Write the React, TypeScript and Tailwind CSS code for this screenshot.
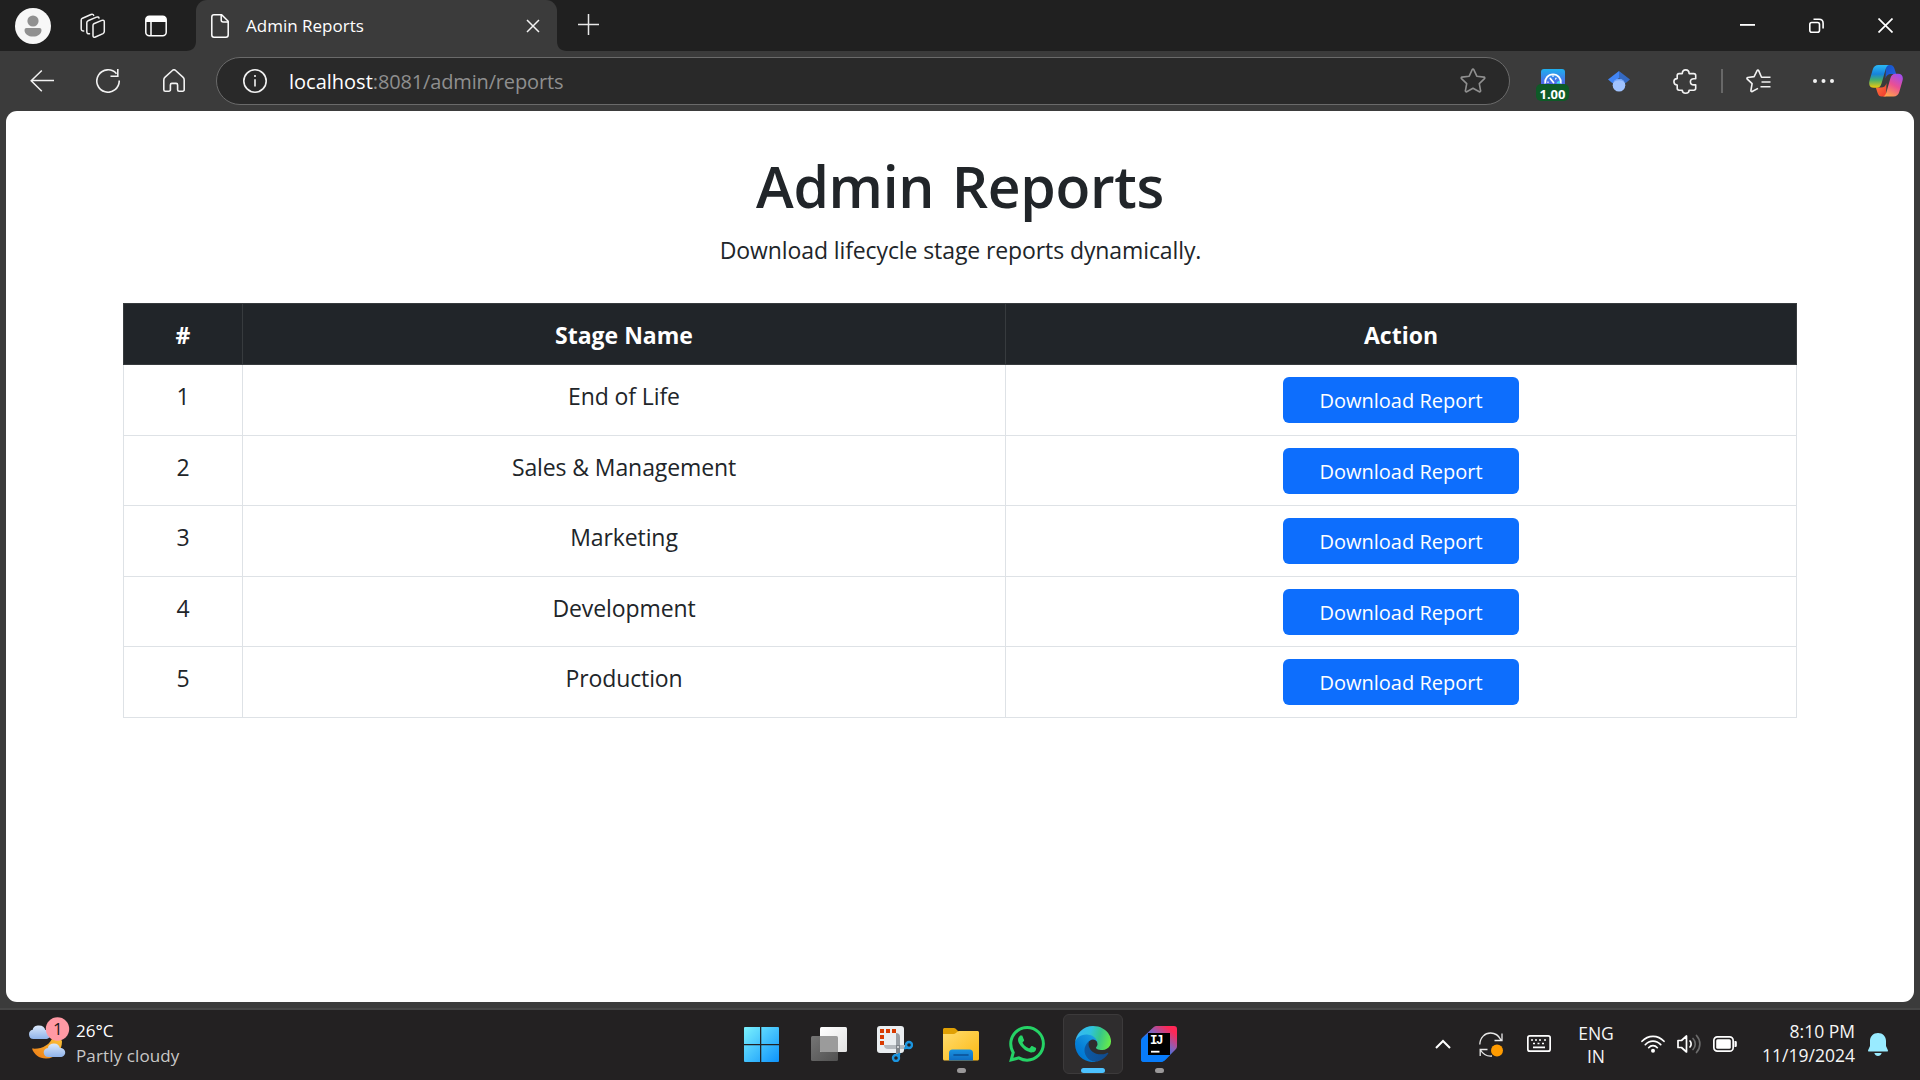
import React from "react";
import { SiWhatsapp } from "react-icons/si";

const stages = ["End of Life", "Sales & Management", "Marketing", "Development", "Production"];

function Avatar() {
  return (
    <svg className="ml-[15px] size-9 shrink-0" viewBox="0 0 36 36">
      <circle cx="18" cy="18" r="18" fill="#f7f7f7" />
      <circle cx="18" cy="13" r="5.6" fill="#919191" />
      <path d="M11.5 20h13a2 2 0 0 1 2 2c0 4-3.6 6.6-8.5 6.6S9.500 26 9.500 22a2 2 0 0 1 2-2Z" fill="#919191" />
    </svg>
  );
}

function WorkspacesIcon() {
  return (
    <svg className="ml-[29px] size-[26px] shrink-0" viewBox="0 0 26 26" fill="none" stroke="#f2f2f2" strokeWidth="1.5" strokeLinejoin="round" strokeLinecap="round">
      <path d="M13.800 10.800 21.800 7.400c1.500-.6 2.500 0 2.500 1.400v9.800c0 .9-.5 1.600-1.300 2l-7.600 3.400c-1.400.6-2.400 0-2.400-1.300V12.600c0-.9.1-1.500.8-1.800Z" />
      <path d="M9.500 20.800c-1.900.3-2.700-.6-2.700-2.100V9.800c0-.9.4-1.600 1.200-2l8.500-3.700c1.100-.4 2.300-.1 2.500 1" />
      <path d="M3.700 18c-1.600.1-2.500-.8-2.500-2.300V7.200c0-.9.5-1.600 1.300-2L11 1.500c1.200-.5 2.400-.1 2.700.9" />
    </svg>
  );
}

function TabActionsIcon() {
  return (
    <svg className="ml-[39px] size-[22px] shrink-0" viewBox="0 0 22 22" fill="none">
      <rect x="0.800" y="1.300" width="20.400" height="19.400" rx="3.500" stroke="#fff" strokeWidth="1.500" />
      <path d="M1 6.900V4.500A3.500 3.500 0 0 1 4.500 1h13A3.500 3.500 0 0 1 21 4.500v2.400Z" fill="#fff" />
      <path d="M6 7v14" stroke="#fff" strokeWidth="1.500" />
    </svg>
  );
}

function TitleBar() {
  return (
    <div className="flex h-[51px] items-center bg-[#202020]">
      <Avatar />
      <WorkspacesIcon />
      <TabActionsIcon />
      <div className="ml-[19px] flex h-[51px] w-[381px] shrink-0 items-center text-[#3b3b3b]">
        <svg className="h-[51px] w-[10px] shrink-0" viewBox="0 0 10 51" fill="currentColor">
          <path d="M0 51c6.500 0 10-3.500 10-10v10Z" />
        </svg>
        <div className="flex h-full w-[361px] items-center rounded-t-[11px] bg-[#3b3b3b]">
          <svg className="ml-[15px] h-[24px] w-[18px] shrink-0" viewBox="0 0 18 24" fill="none" stroke="#fff" strokeWidth="1.500" strokeLinejoin="round">
            <path d="M3 .8h7.700l6.500 6.500V21a2.200 2.200 0 0 1-2.200 2.200H3A2.200 2.200 0 0 1 .8 21V3A2.200 2.200 0 0 1 3 .8Z" />
            <path d="M10.200 1v5a2 2 0 0 0 2 2H17" />
          </svg>
          <span className="ml-[17px] text-[17px] leading-6 text-white">Admin Reports</span>
          <svg className="ml-auto mr-[17px] size-[14px] shrink-0" viewBox="0 0 14 14" stroke="#f2f2f2" strokeWidth="1.500">
            <path d="m1 1 12 12M13 1 1 13" />
          </svg>
        </div>
        <svg className="h-[51px] w-[10px] shrink-0" viewBox="0 0 10 51" fill="currentColor">
          <path d="M10 51C3.500 51 0 47.500 0 41v10Z" />
        </svg>
      </div>
      <svg className="ml-[11px] mb-0.5 size-[21px] shrink-0" viewBox="0 0 21 21" stroke="#e8e8e8" strokeWidth="1.500">
        <path d="M10.500 0v21M0 10.500h21" />
      </svg>
      <div className="ml-auto mr-[27px] flex items-center gap-[54px]">
        <svg className="size-[15px]" viewBox="0 0 15 15" fill="#fff">
          <path d="M0 6h15v1.800H0z" />
        </svg>
        <svg className="size-[15px]" viewBox="0 0 15 15" fill="none" stroke="#fff" strokeWidth="1.600">
          <rect x="0.800" y="4.500" width="9.700" height="9.700" rx="2" />
          <path d="M4.500 1.200h5.600c2.300 0 4 1.700 4 4v5.300" />
        </svg>
        <svg className="size-[15px]" viewBox="0 0 15 15" stroke="#fff" strokeWidth="1.700">
          <path d="m.5.5 14 14M14.500.5l-14 14" />
        </svg>
      </div>
    </div>
  );
}

function SpeedExtension() {
  return (
    <div className="ml-[26px] flex h-[48px] w-[33px] shrink-0 flex-col items-center pt-[12px]">
      <svg className="h-[16px] w-6 shrink-0" viewBox="0 0 24 16">
        <defs>
          <linearGradient id="speed" x1="0" y1="0" x2="0" y2="1">
            <stop offset="0" stopColor="#1fb0ee" />
            <stop offset="1" stopColor="#5560e8" />
          </linearGradient>
        </defs>
        <path d="M0 16V3a3 3 0 0 1 3-3h18a3 3 0 0 1 3 3v13Z" fill="url(#speed)" />
        <path d="M4.200 14.500a7.900 7.900 0 1 1 15.600 0" fill="none" stroke="#fff" strokeWidth="1.800" />
        <path d="m9.300 9.500 3.200 4" stroke="#fff" strokeWidth="1.800" strokeLinecap="round" />
        <path d="m15.300 8.800-1 1.700M7 12.500v1.500M12 6.300v1.700" stroke="#fff" strokeWidth="1.200" />
        <path d="M15.500 14.500c0-1.600 1-2.500 3.500-2.500v2.500Z" fill="#3fe0f0" />
      </svg>
      <span className="-mt-px h-[17px] w-[33px] rounded-[5px] bg-[#0e5a27] text-center text-[13px] font-bold leading-[20px] text-white">1.00</span>
    </div>
  );
}

function CopilotIcon() {
  return (
    <svg className="ml-[35px] h-[32px] w-[34px] shrink-0" viewBox="0 0 34 32">
      <defs>
        <linearGradient id="cpA" x1="0" y1="0" x2="0" y2="1">
          <stop offset="0" stopColor="#2bb8f5" />
          <stop offset="0.400" stopColor="#1683dc" />
          <stop offset="0.650" stopColor="#43ae70" />
          <stop offset="1" stopColor="#f2cb0b" />
        </linearGradient>
        <linearGradient id="cpB" x1="0.800" y1="0" x2="0.300" y2="1">
          <stop offset="0" stopColor="#a04df0" />
          <stop offset="0.500" stopColor="#ea4f94" />
          <stop offset="1" stopColor="#ffa34c" />
        </linearGradient>
        <linearGradient id="cpC" x1="0" y1="0" x2="1" y2="1">
          <stop offset="0" stopColor="#1453c4" />
          <stop offset="1" stopColor="#2764e7" />
        </linearGradient>
        <linearGradient id="cpD" x1="0" y1="0" x2="1" y2="1">
          <stop offset="0" stopColor="#ff7b3d" />
          <stop offset="1" stopColor="#f0382e" />
        </linearGradient>
      </defs>
      <path d="M17 0h4.500c2 0 3.200 1.300 3.800 3.300L27.200 9H22c-3 0-4.700 1.500-5.500 4.500Z" fill="url(#cpC)" />
      <path d="M17 31.500h-4.500c-2 0-3.200-1.300-3.800-3.300L6.800 22.500H12c3 0 4.700-1.500 5.500-4.500Z" fill="url(#cpD)" />
      <path d="M9.500 0H20c-1.800.5-2.800 2-3.400 4.300l-4 14c-.8 3-2.400 4.500-5.200 4.500H5C1 22.800-.6 19.800.5 15.800L3.600 5C4.500 1.800 6.500 0 9.500 0Z" fill="url(#cpA)" />
      <path d="M24.500 31.500H14c1.800-.5 2.800-2 3.400-4.300l4-14c.8-3 2.400-4.500 5.200-4.500H29c4 0 5.600 3 4.500 7l-3.100 10.800c-.9 3.200-2.900 5-5.900 5Z" fill="url(#cpB)" />
    </svg>
  );
}

function Toolbar() {
  return (
    <div className="flex h-[60px] shrink-0 items-center bg-[#3b3b3b]">
      <svg className="ml-[30px] size-6 shrink-0" viewBox="0 0 24 24" fill="none" stroke="#f2f2f2" strokeWidth="1.500">
        <path d="M24 11.500H1M11.800 1.500 1.200 11.700l10.600 10.600" />
      </svg>
      <svg className="ml-[42px] size-6 shrink-0" viewBox="0 0 24 24" fill="none" stroke="#f2f2f2" strokeWidth="1.600">
        <path d="M23.200 11.500A11.200 11.200 0 1 1 20.500 4.700M21.800 0v7.200h-7.300" />
      </svg>
      <svg className="ml-[43px] h-6 w-[22px] shrink-0" viewBox="0 0 22 24" fill="none" stroke="#f2f2f2" strokeWidth="1.600" strokeLinejoin="round">
        <path d="M9.400 1.500a2.400 2.400 0 0 1 3.200 0l7.300 6.600c.8.700 1.300 1.700 1.300 2.800v9.800a1.500 1.500 0 0 1-1.500 1.500h-3.600a1.500 1.500 0 0 1-1.500-1.500v-4.800a1.500 1.500 0 0 0-1.500-1.500H8.900a1.500 1.500 0 0 0-1.500 1.500v4.800a1.500 1.500 0 0 1-1.500 1.500H2.300a1.500 1.500 0 0 1-1.500-1.500v-9.800c0-1.100.5-2.100 1.300-2.800Z" />
      </svg>
      <div className="ml-[31px] flex h-[48px] w-[1294px] shrink-0 items-center rounded-full border border-[#6a6a6a] bg-[#292929]">
        <svg className="ml-[26px] size-6 shrink-0" viewBox="0 0 24 24" fill="none" stroke="#f2f2f2" strokeWidth="1.600">
          <circle cx="12" cy="12" r="11.200" />
          <path d="M12 10.300V17.500M12 6v2" />
        </svg>
        <p className="ml-[22px] pt-0.5 text-[20px] leading-7 text-[#8f8f8f]">
          <span className="text-white">localhost</span>
          <span className="tracking-[-0.15px]">:8081/admin/reports</span>
        </p>
        <svg className="ml-auto mr-[23px] size-[26px] shrink-0" viewBox="0 0 26 26" fill="none" stroke="#8f8f8f" strokeWidth="1.600" strokeLinejoin="round">
          <path d="M12.200 1.600a.9.900 0 0 1 1.600 0l3 6.600 7.200.9c.8.100 1.100 1 .5 1.500l-5.200 5 1.300 7.200c.2.800-.6 1.300-1.300 1L13 20.300l-6.300 3.500c-.7.300-1.500-.2-1.300-1l1.300-7.200-5.200-5C.9 10.100 1.200 9.200 2 9.100l7.200-.9Z" />
        </svg>
      </div>
      <SpeedExtension />
      <svg className="ml-[39px] h-[21px] w-[22px] shrink-0" viewBox="0 0 22 21">
        <path d="M11 0 0 8.500l4.500 3.800L11 7Z" fill="#4285f4" />
        <path d="m11 0 11 8.500-4.500 3.800L11 7Z" fill="#356ac3" />
        <circle cx="11" cy="14.200" r="6.300" fill="#a0c3ff" />
        <path d="M5.200 11.700a6.300 6.300 0 0 1 11.600 0C15 10 13 9.300 11 9.300s-4 .7-5.800 2.400Z" fill="#76a7fa" />
      </svg>
      <svg className="ml-[43px] size-[25px] shrink-0" viewBox="0 0 25 25" fill="none" stroke="#f2f2f2" strokeWidth="1.600" strokeLinejoin="round">
        <path d="M4.200 9.600V6.500c0-1.200.7-1.900 1.900-1.900h3.200C9.300 2.200 10.600.9 12.700.9s3.400 1.300 3.400 3.700h4.700c1.200 0 1.900.7 1.900 1.900v3.200h-1.800c-2.200 0-3.500 1.200-3.500 3.100s1.300 3.100 3.500 3.100h1.800v3.400c0 1.200-.7 1.900-1.900 1.900h-4.700c0 1.900-1.300 3-3.400 3s-3.400-1.100-3.400-3H6.100c-1.200 0-1.900-.7-1.900-1.900V16C2 16 .9 14.700.9 12.800S2 9.600 4.200 9.600Z" />
      </svg>
      <div className="ml-[23px] h-6 w-[1.500px] shrink-0 bg-[#686868]" />
      <svg className="ml-[23px] h-6 w-[25px] shrink-0" viewBox="0 0 25 24" fill="none" stroke="#f2f2f2" strokeWidth="1.600" strokeLinejoin="round">
        <path d="M16.500 8.200h-1L12.700 1.600a.9.900 0 0 0-1.600 0l-3 6-6.300.9c-.8.100-1.100 1-.5 1.600l4.800 4.600-1.200 6.800c-.1.800.6 1.300 1.300 1l5.800-3.100M16 8.200h8.500M15.500 13h9M14.500 17.800h10" />
      </svg>
      <svg className="ml-[42px] h-1 w-[21px] shrink-0" viewBox="0 0 21 4" fill="#f2f2f2">
        <circle cx="2" cy="2" r="2" />
        <circle cx="10.500" cy="2" r="2" />
        <circle cx="19" cy="2" r="2" />
      </svg>
      <CopilotIcon />
    </div>
  );
}

function ReportsPage() {
  return (
    <main className="mx-1.5 flex h-[891px] shrink-0 flex-col items-center rounded-[11px] bg-white pt-[39px] text-[#212529]">
      <h1 className="text-[57px] font-semibold leading-[72px] tracking-[-0.3px] [word-spacing:3px]">Admin Reports</h1>
      <p className="mt-2.5 pl-px text-[23px] leading-9 tracking-[-0.1px]">Download lifecycle stage reports dynamically.</p>
      <div className="mt-[35px] w-[1674px] text-center text-[23px] leading-9">
        <div className="grid h-[62px] grid-cols-[119px_763px_792px] border-y border-[#373b3e] bg-[#212529] font-bold leading-[62px] text-white">
          <div className="border-l border-[#373b3e]">#</div>
          <div className="border-l border-[#373b3e]">Stage Name</div>
          <div className="border-x border-[#373b3e]">Action</div>
        </div>
        {stages.map((name, i) => (
          <div key={name} className="grid grid-cols-[119px_763px_792px] border-b border-[#dee2e6] odd:h-[70px] even:h-[71px]">
            <div className="border-l border-[#dee2e6] pt-[13px]">{i + 1}</div>
            <div className="border-l border-[#dee2e6] pt-[13px] tracking-[-0.1px]">{name}</div>
            <div className="flex items-start justify-center border-x border-[#dee2e6] pt-3">
              <button className="h-[46px] w-[236px] rounded-md bg-[#0d6efd] text-[20px] leading-[46px] text-white">
                <span className="block pt-px">Download Report</span>
              </button>
            </div>
          </div>
        ))}
      </div>
    </main>
  );
}

function WeatherIcon() {
  return (
    <svg className="ml-[28px] size-[42px] shrink-0 overflow-visible" viewBox="0 6.500 42 42">
      <defs>
        <linearGradient id="cloud" x1="0" y1="0" x2="0" y2="1">
          <stop offset="0" stopColor="#dbe9fb" />
          <stop offset="1" stopColor="#8fb3ea" />
        </linearGradient>
        <linearGradient id="moon" x1="1" y1="0" x2="0" y2="1">
          <stop offset="0" stopColor="#fcc63a" />
          <stop offset="1" stopColor="#ee7a14" />
        </linearGradient>
      </defs>
      <path d="M25 20c3.500 1 8 0 9 5 0 9-6 17-16 17C11 42 6 38 4 32c9 1 18-3 21-12Z" fill="url(#moon)" />
      <path d="M5.500 22.500a4.700 4.700 0 0 1-.7-9.300C5 10.500 7.500 9 11 9c3.700 0 5.700 2 6.300 4.500 3.200 0 5.200 2 5.200 4.500s-2 4.500-5 4.500Z" fill="url(#cloud)" />
      <path d="M20.500 40.500a4.500 4.500 0 0 1-.6-9c.3-3 2.800-4.500 6-4.500 3.500 0 5.400 2 6 4.500 3.300 0 5.300 2 5.300 4.500s-2 4.500-5 4.500Z" fill="url(#cloud)" />
      <circle cx="29.500" cy="12.500" r="11.700" fill="#ff99a4" />
      <text x="29.800" y="18.500" textAnchor="middle" fontSize="17" fill="#1a1a1a">1</text>
    </svg>
  );
}

function AppTile({ children, active, running }: { children: React.ReactNode; active?: boolean; running?: boolean }) {
  return (
    <div className={active ? "flex size-[60px] flex-col items-center rounded-md border border-[#3c3a3b] bg-[#2f2d2e] pt-[11px]" : "flex size-[60px] flex-col items-center pt-3"}>
      {children}
      {active && <div className="mt-1.5 h-[5px] w-6 shrink-0 rounded-full bg-[#4cc2ff]" />}
      {running && <div className="mt-1.5 h-[5px] w-[9px] shrink-0 rounded-full bg-[#9a9899]" />}
    </div>
  );
}

function StartIcon() {
  return (
    <svg className="size-9 shrink-0 overflow-visible" viewBox="2 -1 36 36">
      <defs>
        <linearGradient id="win" gradientUnits="userSpaceOnUse" x1="0" y1="0" x2="35" y2="35">
          <stop offset="0" stopColor="#7cf3fd" />
          <stop offset="0.500" stopColor="#45c3fd" />
          <stop offset="1" stopColor="#0f94fb" />
        </linearGradient>
      </defs>
      <path d="M2 0h15v17H1V1a1 1 0 0 1 1-1ZM18.300 0H35a1 1 0 0 1 1 1v16H18.300ZM1 18.300h16V35H2a1 1 0 0 1-1-1ZM18.300 18.300H36V34a1 1 0 0 1-1 1H18.300Z" fill="url(#win)" />
    </svg>
  );
}

function TaskViewIcon() {
  return (
    <svg className="size-9 shrink-0" viewBox="0 0 36 36">
      <defs>
        <linearGradient id="tvA" x1="0" y1="0" x2="1" y2="1">
          <stop offset="0" stopColor="#ffffff" />
          <stop offset="1" stopColor="#e2e2e2" />
        </linearGradient>
        <linearGradient id="tvB" x1="0" y1="0" x2="1" y2="1">
          <stop offset="0" stopColor="#757575" />
          <stop offset="1" stopColor="#515151" />
        </linearGradient>
      </defs>
      <rect x="0" y="10" width="27" height="25" rx="1.500" fill="url(#tvB)" />
      <rect x="9" y="1" width="27" height="25" rx="1.500" fill="url(#tvA)" />
      <path d="M9 10h16.500a1.500 1.500 0 0 1 1.500 1.500V26H10.500A1.500 1.500 0 0 1 9 24.500Z" fill="#9b9b9b" />
    </svg>
  );
}

function SnippingIcon() {
  return (
    <svg className="size-9 shrink-0" viewBox="0 0 36 36">
      <rect x="0" y="0" width="27" height="27" rx="3" fill="#eaeef1" />
      <g fill="#d83b01">
        <path d="M3 3h4v4H3zM9 3h4v4H9zM15 3h4v4h-4zM3 9h4v4H3zM3 15h4v4H3z" />
      </g>
      <path d="M19 7c2.500 0 4 1.500 4 4v17h-4Z" fill="#9aa0a6" />
      <path d="M7 19c0 2.500 1.500 4 4 4h17v-4Z" fill="#b4b9be" />
      <path d="M19 19h4v9l-4-1Z" fill="#7d8389" />
      <circle cx="21" cy="21" r="1" fill="#e8eaec" />
      <circle cx="32" cy="19" r="3" fill="none" stroke="#1b95e0" strokeWidth="2.400" />
      <circle cx="19" cy="32" r="3" fill="none" stroke="#1b95e0" strokeWidth="2.400" />
      <path d="m27 22.500 4.500-1M22.500 27l-1 4" stroke="#1b95e0" strokeWidth="2.200" />
    </svg>
  );
}

function FolderIcon() {
  return (
    <svg className="size-9 shrink-0" viewBox="0 0 36 36">
      <defs>
        <linearGradient id="fold" x1="0" y1="0" x2="1" y2="1">
          <stop offset="0" stopColor="#ffdc6e" />
          <stop offset="1" stopColor="#fcb913" />
        </linearGradient>
        <linearGradient id="dock" x1="0" y1="0" x2="0" y2="1">
          <stop offset="0" stopColor="#1a93e0" />
          <stop offset="1" stopColor="#0f6cc2" />
        </linearGradient>
      </defs>
      <path d="M0 3.500C0 2.700.7 2 1.500 2h9.200c.8 0 1.500.3 2 .8L15.500 5.500v6H0Z" fill="#e0a004" />
      <path d="M0 8h10.500c1 0 1.700-.3 2.400-.9l1.200-1.200c.6-.6 1.300-.9 2.200-.9H34.500c.8 0 1.500.7 1.500 1.500V33c0 .8-.7 1.500-1.500 1.500h-33C.7 34.500 0 33.800 0 33Z" fill="url(#fold)" />
      <path d="M6 34.500V27a3.500 3.500 0 0 1 3.500-3.500h17A3.500 3.500 0 0 1 30 27v7.500Z" fill="url(#dock)" />
      <path d="M11 29h14" stroke="#0a4f94" strokeWidth="1.600" strokeLinecap="round" />
    </svg>
  );
}

function EdgeIcon() {
  return (
    <svg className="size-9 shrink-0" viewBox="0 0 256 256">
      <defs>
        <linearGradient id="eA" gradientUnits="userSpaceOnUse" x1="63" y1="177" x2="241" y2="177">
          <stop offset="0" stopColor="#0c59a4" />
          <stop offset="1" stopColor="#114a8b" />
        </linearGradient>
        <linearGradient id="eB" gradientUnits="userSpaceOnUse" x1="157" y1="100" x2="46" y2="221">
          <stop offset="0" stopColor="#1b9de2" />
          <stop offset="0.160" stopColor="#1595df" />
          <stop offset="0.670" stopColor="#0680d7" />
          <stop offset="1" stopColor="#0078d4" />
        </linearGradient>
        <linearGradient id="eC" gradientUnits="userSpaceOnUse" x1="20" y1="50" x2="250" y2="115">
          <stop offset="0" stopColor="#35b8f1" />
          <stop offset="0.350" stopColor="#2fc2df" />
          <stop offset="0.650" stopColor="#36c78a" />
          <stop offset="1" stopColor="#66eb4a" />
        </linearGradient>
      </defs>
      <path d="M231.050 190.540a93.730 93.730 0 0 1-10.540 4.710 101.870 101.870 0 0 1-35.900 6.460c-47.320 0-88.540-32.550-88.540-74.320A31.480 31.480 0 0 1 112.500 100.080c-42.800 1.800-53.800 46.400-53.800 72.530 0 73.880 68.090 81.370 82.760 81.370 7.910 0 19.840-2.300 27-4.560l1.310-.44a128.340 128.340 0 0 0 66.600-52.800 4 4 0 0 0-5.320-5.640Z" fill="url(#eA)" />
      <path d="M105.730 241.420A79.200 79.200 0 0 1 83 220.080a80.720 80.720 0 0 1 29.490-120c3.120-1.470 8.450-4.130 15.540-4a32.350 32.350 0 0 1 25.690 13 31.880 31.880 0 0 1 6.360 18.660c0-.21 24.460-79.600-80-79.600-43.900 0-80 41.660-80 78.210a130.150 130.150 0 0 0 12.110 56 128 128 0 0 0 156.380 67.110 75.550 75.550 0 0 1-62.780-8Z" fill="url(#eB)" />
      <path d="M152.330 148.860c-.81 1.050-3.300 2.500-3.300 5.660 0 2.610 1.700 5.120 4.720 7.230 14.380 10 41.490 8.680 41.560 8.680a59.560 59.560 0 0 0 30.270-8.350 61.380 61.380 0 0 0 30.430-52.880c.26-22.410-8-37.310-11.340-43.910C223.460 23.840 177.720 0 128 0A128 128 0 0 0 0 126.200c.48-36.540 36.800-66.050 80-66.050 3.500 0 23.460.34 42 10.070 16.340 8.580 24.900 18.940 30.850 29.210 6.180 10.670 7.280 24.150 7.280 29.520s-2.740 13.330-7.800 19.910Z" fill="url(#eC)" />
    </svg>
  );
}

function IntelliJIcon() {
  return (
    <svg className="size-9 shrink-0" viewBox="0 0 36 36">
      <defs>
        <linearGradient id="ij" gradientUnits="userSpaceOnUse" x1="8" y1="34" x2="33" y2="4">
          <stop offset="0.300" stopColor="#087cfa" />
          <stop offset="0.620" stopColor="#8a5fb8" />
          <stop offset="0.950" stopColor="#fe2857" />
        </linearGradient>
      </defs>
      <path d="M12.500 1.300A5 5 0 0 1 16 0h17a3 3 0 0 1 3 3v17c0 1.300-.5 2.600-1.500 3.500L23.500 34.500A5 5 0 0 1 20 36H3a3 3 0 0 1-3-3V15c0-1.300.5-2.600 1.500-3.500Z" fill="url(#ij)" />
      <path d="M0 15 7 8v21h22l-5.500 5.500A5 5 0 0 1 20 36H3a3 3 0 0 1-3-3Z" fill="#087cfa" />
      <path d="M7 7h22v22H7z" fill="#000" />
      <text x="9" y="17.800" fontSize="12.500" fontWeight="700" fontFamily="Liberation Mono, monospace" fill="#fff" letterSpacing="-1.500">IJ</text>
      <path d="M10 24.800h8.500v1.800H10z" fill="#fff" />
    </svg>
  );
}

function Tray() {
  return (
    <div className="flex h-[68px] items-center text-[17.5px] leading-6 text-[#f5f5f5]">
      <svg className="h-[10px] w-4" viewBox="0 0 16 10" fill="none" stroke="#fff" strokeWidth="2">
        <path d="M1 9 8 2l7 7" />
      </svg>
      <svg className="ml-[27px] h-[25px] w-[26px]" viewBox="0 0 26 25" fill="none" stroke="#e8e8e8" strokeWidth="1.300">
        <path d="M1.800 12.500C2 5.500 7 1 12.500 1c4.500 0 8 2 10.500 7M24 1.500V8.500h-7.500M2.200 24v-6.500H9.500M2.500 18c3 5 7 6.500 11.500 6" />
        <circle cx="19" cy="18.500" r="6" fill="#ff9b00" stroke="none" />
      </svg>
      <svg className="ml-[23px] mt-[-2px] h-[17px] w-6" viewBox="0 0 24 17" fill="none" stroke="#fff" strokeWidth="1.700">
        <rect x="0.850" y="0.850" width="22.300" height="15.300" rx="2" />
        <path d="M4 5h2M8 5h2M12 5h2M17 5h2M6 8.500h2M10.500 8.500h2M15 8.500h2M6 12.300h12" />
      </svg>
      <div className="ml-[27px] w-[36px] pt-px text-center leading-[23px]">
        <div>ENG</div>
        <div>IN</div>
      </div>
      <svg className="ml-[27px] mb-px h-[18px] w-6" viewBox="0 0 24 18" fill="none" stroke="#fff" strokeWidth="1.700" strokeLinecap="round">
        <path d="M1 6.300c6-6.700 16-6.700 22 0M4.300 9.700c4.300-4.700 11-4.700 15.400 0M7.700 12.700c2.300-2.700 6.300-2.700 8.600 0" />
        <circle cx="12" cy="15.700" r="2" fill="#fff" stroke="none" />
      </svg>
      <svg className="ml-3 h-[20px] w-6" viewBox="0 0 24 20" fill="none" stroke="#fff" strokeWidth="1.700" strokeLinejoin="round" strokeLinecap="round">
        <path d="M1 6.500h3.500L9.500 2v16l-5-4.500H1ZM13 7c1.500 1.500 1.500 4.500 0 6" />
        <path d="M16 4.500c3 3 3 8 0 11M19.500 1.500c4.500 5 4.500 12 0 17" stroke="#6b6b6b" />
      </svg>
      <svg className="ml-3 h-4 w-6" viewBox="0 0 24 16" fill="none">
        <rect x="0.850" y="0.850" width="19.300" height="14.300" rx="3.500" stroke="#fff" strokeWidth="1.700" />
        <rect x="3.200" y="3.200" width="14.600" height="9.600" rx="1.500" fill="#fff" />
        <path d="M21.500 5h1a1.300 1.300 0 0 1 1.300 1.300v3.400a1.300 1.300 0 0 1-1.300 1.300h-1Z" fill="#fff" />
      </svg>
      <div className="ml-[24px] w-[94px] pb-0.5 text-right">
        <div>8:10 PM</div>
        <div>11/19/2024</div>
      </div>
      <svg className="ml-[13px] mr-[32px] h-[23px] w-5" viewBox="0 0 20 23" fill="#99ebff">
        <path d="M10 0c4.700 0 8 3.500 8 8v5l1.800 4c.4.900 0 1.500-.9 1.500H1.100c-.9 0-1.300-.6-.9-1.500L2 13V8c0-4.500 3.300-8 8-8ZM6.300 20h7.400c-.6 1.900-1.900 3-3.700 3s-3.100-1.100-3.700-3Z" />
      </svg>
    </div>
  );
}

function Taskbar() {
  return (
    <div className="flex h-[70px] shrink-0 bg-[#232122]">
      <div className="flex h-[68px] w-[733px] shrink-0 items-center">
        <WeatherIcon />
        <div className="ml-[6px] pb-[3px] text-[17px] leading-[25px]">
          <div className="text-white">26°C</div>
          <div className="tracking-[0.12px] text-[#c9c8c8]">Partly cloudy</div>
        </div>
      </div>
      <div className="flex shrink-0 gap-1.5 pt-1">
        <AppTile><StartIcon /></AppTile>
        <AppTile><TaskViewIcon /></AppTile>
        <AppTile><SnippingIcon /></AppTile>
        <AppTile running><FolderIcon /></AppTile>
        <AppTile><SiWhatsapp className="size-9 shrink-0 text-[#25d366]" /></AppTile>
        <AppTile active><EdgeIcon /></AppTile>
        <AppTile running><IntelliJIcon /></AppTile>
      </div>
      <div className="ml-auto">
        <Tray />
      </div>
    </div>
  );
}

export default function App() {
  return (
    <div className="flex h-[1080px] w-[1920px] flex-col overflow-hidden bg-[#3b3b3b] font-['Open_Sans',sans-serif]">
      <TitleBar />
      <Toolbar />
      <ReportsPage />
      <div className="h-2 shrink-0 border-b-2 border-[#454545]" />
      <Taskbar />
    </div>
  );
}
